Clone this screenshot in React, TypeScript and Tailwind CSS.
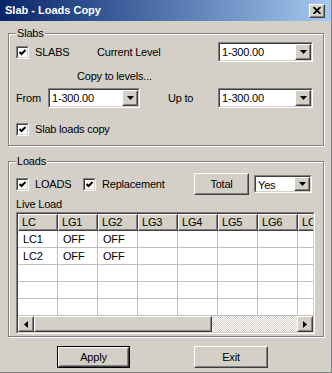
import type { ReactNode } from 'react'

const font = { fontFamily: '"Liberation Sans", Arial, sans-serif' }

type BoxProps = { children?: ReactNode; className?: string }

function Sunken({ children, className = '' }: BoxProps) {
  return (
    <div className={`border border-t-[#808080] border-l-[#808080] border-r-white border-b-white ${className}`}>
      <div className="flex h-full w-full border border-t-[#404040] border-l-[#404040] border-r-[#d4d0c8] border-b-[#d4d0c8] bg-white">
        {children}
      </div>
    </div>
  )
}

function Raised({ children, className = '' }: BoxProps) {
  return (
    <div className={`border border-t-white border-l-white border-r-[#404040] border-b-[#404040] bg-[#d4d0c8] ${className}`}>
      <div className="flex h-full w-full items-center justify-center border border-t-[#d4d0c8] border-l-[#d4d0c8] border-r-[#808080] border-b-[#808080]">
        {children}
      </div>
    </div>
  )
}

function Arrow({ dir = 'down' }: { dir?: 'down' | 'left' | 'right' }) {
  const points = {
    down: '0,0 7,0 3.5,4',
    left: '4,0 4,7 0,3.5',
    right: '0,0 0,7 4,3.5',
  }[dir]
  const size = dir === 'down' ? { w: 7, h: 4 } : { w: 4, h: 7 }
  return (
    <svg width={size.w} height={size.h} viewBox={`0 0 ${size.w} ${size.h}`}>
      <polygon points={points} fill="#000" />
    </svg>
  )
}

function Combo({ value, className }: { value: string; className: string }) {
  return (
    <Sunken className={className}>
      <span className="flex-1 pl-[2px] leading-[16px]">{value}</span>
      <Raised className="h-full w-[16px]">
        <Arrow />
      </Raised>
    </Sunken>
  )
}

function Check({ label, className = '' }: { label: string; className?: string }) {
  return (
    <div className={`flex items-center gap-[6px] ${className}`}>
      <Sunken className="h-[13px] w-[13px]">
        <svg width="9" height="9" viewBox="0 0 9 9">
          <path d="M1.5 4 L3.5 6 L7.5 2" stroke="#000" strokeWidth="2" fill="none" />
        </svg>
      </Sunken>
      <span>{label}</span>
    </div>
  )
}

function Group({ title, className, children }: { title: string; className: string; children: ReactNode }) {
  return (
    <div className={`relative w-[316px] border border-[#808080] shadow-[inset_1px_1px_0_#fff,1px_1px_0_#fff] ${className}`}>
      <span className="absolute -top-[8px] left-[7px] bg-[#d4d0c8] px-[1px] leading-[14px]">{title}</span>
      {children}
    </div>
  )
}

const headers = ['LC', 'LG1', 'LG2', 'LG3', 'LG4', 'LG5', 'LG6', 'LC']
const rows = [
  ['LC1', 'OFF', 'OFF'],
  ['LC2', 'OFF', 'OFF'],
  [],
  [],
  [],
]

function LoadGrid() {
  return (
    <Sunken className="ml-[7px] mt-[1px] h-[122px] w-[299px]">
      <div className="flex w-full flex-col overflow-hidden">
        <div className="flex h-[17px] shrink-0">
          {headers.map((h, i) => (
            <div
              key={i}
              className="h-[17px] w-[40px] shrink-0 border border-t-white border-l-white border-r-[#404040] border-b-[#404040] bg-[#d4d0c8] pl-[3px] leading-[15px] shadow-[inset_-1px_-1px_0_#808080]"
            >
              {h}
            </div>
          ))}
        </div>
        <div className="h-[85px] shrink-0 overflow-hidden">
          {rows.map((r, ri) => (
            <div key={ri} className="flex h-[17px]">
              {headers.map((_, ci) => (
                <div
                  key={ci}
                  className="h-[17px] w-[40px] shrink-0 border-b border-r border-[#c0c0c0] pl-[5px] leading-[16px]"
                >
                  {r[ci] ?? ''}
                </div>
              ))}
            </div>
          ))}
        </div>
        <div className="flex h-[16px] shrink-0 bg-[repeating-conic-gradient(#d4d0c8_0_25%,#ffffff_0_50%)] bg-[length:2px_2px]">
          <Raised className="h-[16px] w-[16px] shrink-0">
            <Arrow dir="left" />
          </Raised>
          <Raised className="h-[16px] w-[178px] shrink-0" />
          <div className="flex-1" />
          <Raised className="h-[16px] w-[16px] shrink-0">
            <Arrow dir="right" />
          </Raised>
        </div>
      </div>
    </Sunken>
  )
}

export default function App() {
  return (
    <div
      style={font}
      className="h-[373px] w-[332px] overflow-hidden border-b border-r border-[#808080] bg-[#d4d0c8] text-[11px] tracking-[-0.2px] text-black"
    >
      <div className="flex h-[21px] items-center bg-gradient-to-r from-[#0a246a] to-[#a6caf0] pl-[5px] pr-[6px]">
        <span className="text-[11px] font-bold tracking-normal text-white">Slab - Loads Copy</span>
        <Raised className="ml-auto h-[14px] w-[16px]">
          <svg width="8" height="7" viewBox="0 0 8 7">
            <path d="M0.5 0 L7.5 7 M7.5 0 L0.5 7" stroke="#000" strokeWidth="1.8" />
          </svg>
        </Raised>
      </div>

      <div className="flex flex-col pl-[8px]">
        <Group title="Slabs" className="mt-[12px] h-[113px]">
          <div className="mt-[8px] flex h-[20px] items-center pl-[7px]">
            <Check label="SLABS" className="w-[81px]" />
            <span className="w-[121px]">Current Level</span>
            <Combo value="1-300.00" className="h-[20px] w-[95px]" />
          </div>
          <div className="mt-[7px] h-[14px] pl-[68px] leading-[14px]">Copy to levels...</div>
          <div className="mt-[5px] flex h-[20px] items-center pl-[7px]">
            <span className="w-[32px]">From</span>
            <Combo value="1-300.00" className="h-[20px] w-[92px]" />
            <span className="ml-[28px] w-[50px]">Up to</span>
            <Combo value="1-300.00" className="h-[20px] w-[95px]" />
          </div>
          <div className="mt-[14px] flex h-[15px] items-center pl-[7px]">
            <Check label="Slab loads copy" />
          </div>
        </Group>

        <Group title="Loads" className="mt-[15px] h-[176px]">
          <div className="mt-[11px] flex h-[22px] items-center pl-[7px]">
            <Check label="LOADS" className="w-[67px]" />
            <Check label="Replacement" className="w-[111px]" />
            <Raised className="h-[22px] w-[55px]">Total</Raised>
            <Combo value="Yes" className="ml-[5px] h-[18px] w-[58px]" />
          </div>
          <div className="mt-[2px] h-[14px] pl-[7px] leading-[14px]">Live Load</div>
          <LoadGrid />
        </Group>

        <div className="mt-[9px] flex h-[22px]">
          <div className="ml-[49px] h-[22px] w-[73px] border border-black">
            <Raised className="h-full w-full">Apply</Raised>
          </div>
          <Raised className="ml-[64px] h-[22px] w-[74px]">Exit</Raised>
        </div>
      </div>
    </div>
  )
}
